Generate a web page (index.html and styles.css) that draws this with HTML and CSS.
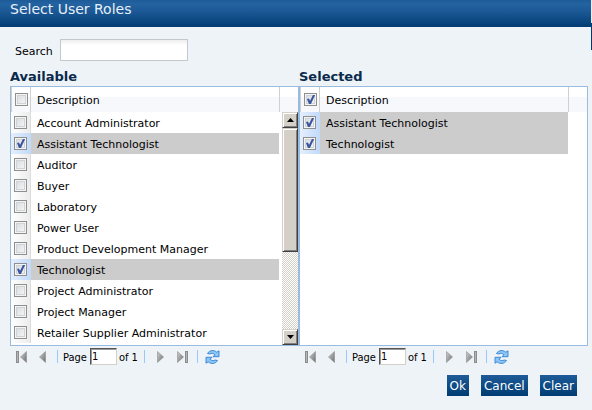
FILE: index.html
```html
<!DOCTYPE HTML>
<html lang="en">
<head>
<meta charset="utf-8">
<title>Select User Roles</title>
<link rel="stylesheet" href="styles.css">
</head>
<body>
	<svg class="defs" width="0" height="0">
		<defs>
			<linearGradient id="grey" x1="0" y1="0" x2="1" y2="1">
				<stop offset="0" stop-color="#d0d0d0"/>
				<stop offset="1" stop-color="#6c6c6c"/>
			</linearGradient>
			<symbol id="first" viewBox="0 0 11 12">
				<rect x="0.5" y="0.5" width="2" height="11" fill="#b5b5b5" stroke="#8c8c8c"/>
				<path d="M10.500 0.500V11.500L4.500 6z" fill="url(#grey)" stroke="#8f8f8f" stroke-width="0.6"/>
			</symbol>
			<symbol id="prev" viewBox="0 0 7 12">
				<path d="M6.500 0.500V11.500L0.500 6z" fill="url(#grey)" stroke="#8f8f8f" stroke-width="0.6"/>
			</symbol>
			<symbol id="next" viewBox="0 0 7 12">
				<path d="M0.500 0.500V11.500L6.500 6z" fill="url(#grey)" stroke="#8f8f8f" stroke-width="0.6"/>
			</symbol>
			<symbol id="last" viewBox="0 0 11 12">
				<path d="M0.500 0.500V11.500L6.500 6z" fill="url(#grey)" stroke="#8f8f8f" stroke-width="0.6"/>
				<rect x="8.500" y="0.500" width="2" height="11" fill="#b5b5b5" stroke="#8c8c8c"/>
			</symbol>
			<symbol id="refresh" viewBox="0 0 15 14">
				<path id="arrow" d="M2.500 3.500C4.500 0 9 -0.300 11.800 2.200L14 0.800V6.700H8L10 4.700C8 3 6.200 3 5 4z" fill="#8cc8f7" stroke="#2f7fd0" stroke-width="0.9" stroke-linejoin="round"/>
				<use href="#arrow" transform="rotate(180 7.500 7)"/>
			</symbol>
		</defs>
	</svg>

	<div class="dialog">
		<h1 class="title">Select User Roles</h1>
		<div class="content">
			<div class="search">
				<label for="search">Search</label>
				<input type="text" id="search">
			</div>

			<div class="lists">
				<div class="list">
					<h2>Available</h2>
					<div class="grid">
						<table>
							<thead>
								<tr><th class="check"><input type="checkbox" aria-label="All available"></th><th class="desc">Description</th><th class="end"></th></tr>
							</thead>
							<tbody>
								<tr><td class="check"><input type="checkbox" id="a1"></td><td class="desc"><label for="a1">Account Administrator</label></td><td></td></tr>
								<tr class="on"><td class="check"><input type="checkbox" id="a2" checked></td><td class="desc"><label for="a2">Assistant Technologist</label></td><td></td></tr>
								<tr><td class="check"><input type="checkbox" id="a3"></td><td class="desc"><label for="a3">Auditor</label></td><td></td></tr>
								<tr><td class="check"><input type="checkbox" id="a4"></td><td class="desc"><label for="a4">Buyer</label></td><td></td></tr>
								<tr><td class="check"><input type="checkbox" id="a5"></td><td class="desc"><label for="a5">Laboratory</label></td><td></td></tr>
								<tr><td class="check"><input type="checkbox" id="a6"></td><td class="desc"><label for="a6">Power User</label></td><td></td></tr>
								<tr><td class="check"><input type="checkbox" id="a7"></td><td class="desc"><label for="a7">Product Development Manager</label></td><td></td></tr>
								<tr class="on"><td class="check"><input type="checkbox" id="a8" checked></td><td class="desc"><label for="a8">Technologist</label></td><td></td></tr>
								<tr><td class="check"><input type="checkbox" id="a9"></td><td class="desc"><label for="a9">Project Administrator</label></td><td></td></tr>
								<tr><td class="check"><input type="checkbox" id="a10"></td><td class="desc"><label for="a10">Project Manager</label></td><td></td></tr>
								<tr><td class="check"><input type="checkbox" id="a11"></td><td class="desc"><label for="a11">Retailer Supplier Administrator</label></td><td></td></tr>
							</tbody>
						</table>
						<div class="scrollbar">
							<button type="button" aria-label="Scroll up"><svg width="7" height="4"><path d="M0 4L3.500 0L7 4z"/></svg></button>
							<div class="thumb"></div>
							<div class="track"></div>
							<button type="button" aria-label="Scroll down"><svg width="7" height="4"><path d="M0 0H7L3.500 4z"/></svg></button>
						</div>
					</div>
					<div class="pager">
						<button type="button" class="first" aria-label="First page"><svg width="11" height="12"><use href="#first"/></svg></button>
						<button type="button" class="prev" aria-label="Previous page"><svg width="7" height="12"><use href="#prev"/></svg></button>
						<span class="sep"></span>
						<label for="page1">Page</label>
						<input type="text" id="page1" value="1">
						<span class="total">of 1</span>
						<span class="sep"></span>
						<button type="button" class="next" aria-label="Next page"><svg width="7" height="12"><use href="#next"/></svg></button>
						<button type="button" class="last" aria-label="Last page"><svg width="11" height="12"><use href="#last"/></svg></button>
						<span class="sep"></span>
						<button type="button" class="refresh" aria-label="Refresh"><svg width="15" height="14"><use href="#refresh"/></svg></button>
					</div>
				</div>

				<div class="list">
					<h2>Selected</h2>
					<div class="grid">
						<table>
							<thead>
								<tr><th class="check"><input type="checkbox" aria-label="All selected" checked></th><th class="desc">Description</th><th class="end"></th></tr>
							</thead>
							<tbody>
								<tr class="on"><td class="check"><input type="checkbox" id="s1" checked></td><td class="desc"><label for="s1">Assistant Technologist</label></td><td></td></tr>
								<tr class="on"><td class="check"><input type="checkbox" id="s2" checked></td><td class="desc"><label for="s2">Technologist</label></td><td></td></tr>
							</tbody>
						</table>
					</div>
					<div class="pager">
						<button type="button" class="first" aria-label="First page"><svg width="11" height="12"><use href="#first"/></svg></button>
						<button type="button" class="prev" aria-label="Previous page"><svg width="7" height="12"><use href="#prev"/></svg></button>
						<span class="sep"></span>
						<label for="page2">Page</label>
						<input type="text" id="page2" value="1">
						<span class="total">of 1</span>
						<span class="sep"></span>
						<button type="button" class="next" aria-label="Next page"><svg width="7" height="12"><use href="#next"/></svg></button>
						<button type="button" class="last" aria-label="Last page"><svg width="11" height="12"><use href="#last"/></svg></button>
						<span class="sep"></span>
						<button type="button" class="refresh" aria-label="Refresh"><svg width="15" height="14"><use href="#refresh"/></svg></button>
					</div>
				</div>
			</div>

			<div class="buttons">
				<button type="button">Ok</button>
				<button type="button">Cancel</button>
				<button type="button">Clear</button>
			</div>
		</div>
	</div>
</body>
</html>
```
FILE: styles.css
```css
*{
	margin: 0;
	padding: 0;
	box-sizing: border-box;
}

body{
	font-family: Verdana, "DejaVu Sans", sans-serif;
	font-size: 11px;
	color: #000;
	background: linear-gradient(#e8eef4 23px, #003c73 23px, #003c73 50px, #eef3f7 50px) no-repeat #eef3f7;
	min-height: 100vh;
	padding-right: 1px;
}
.defs{
	position: absolute;
}
button{
	font: inherit;
	border: 0;
	background: none;
}
svg{
	display: block;
}

.dialog{
	background: #edf3f7;
	min-height: 100vh;
}
.title{
	height: 27px;
	padding-left: 10px;
	background: linear-gradient(#1d5a98, #2463a1 4px, #1b5794 12px, #003c73);
	color: #e6f0fa;
	font-size: 14px;
	font-weight: normal;
	line-height: 18px;
}
.content{
	padding: 12px 3px 0 10px;
}

.search{
	display: flex;
	align-items: center;
	gap: 7px;
	padding-left: 5px;
}
.search label{
	padding-top: 2px;
}
.search input{
	width: 128px;
	height: 22px;
	padding: 0 3px;
	border: 1px solid #c3c8cc;
	background: linear-gradient(#eee, #fff 5px);
	font: inherit;
}

/* two lists side by side */
.lists{
	display: flex;
	padding-top: 7px;
}
.list{
	flex: 1;
	min-width: 0;
}
.list h2{
	height: 18px;
	color: #0a2a4c;
	font-size: 13px;
	line-height: 17px;
}
.grid{
	display: flex;
	position: relative;
	height: 260px;
	border: 1px solid #99bbe0;
	background: #fff;
}

table{
	width: 100%;
	table-layout: fixed;
	border-collapse: separate;
	border-spacing: 0;
	align-self: flex-start;
}
thead tr{
	height: 25px;
	background: linear-gradient(#fff 10px, #f6f8fc 10px);
}
tbody tr{
	height: 21px;
}
th{
	font-weight: normal;
	text-align: left;
}
.check{
	width: 20px;
	padding-left: 3px;
}
thead .check{
	border-left: 1px solid #d0d0d0;
	border-right: 1px solid #d0d0d0;
}
tbody .check{
	background: linear-gradient(to right, #fff, #ececec);
	border-right: 1px solid #dcdcdc;
}
tbody .on .check{
	background: linear-gradient(to right, #e4efff, #c3daf9);
	border-right-color: #c3daf9;
}
.desc{
	padding: 2px 0 0 6px;
	white-space: nowrap;
}
.on .desc{
	background: #ccc;
}
.end{
	width: 19px;
	border-left: 1px solid #d0d0d0;
}

input[type=checkbox]{
	display: block;
	appearance: none;
	width: 13px;
	height: 13px;
	border: 1px solid #8e8f8f;
	background: linear-gradient(135deg, #d4d7db, #fafafa);
	box-shadow: inset 0 0 0 1px #f4f4f4, inset 0 0 0 2px #d0d3d6;
}
input[type=checkbox]:checked::before{
	content: "";
	display: block;
	width: 11px;
	height: 11px;
	background: #3a56a0;
	clip-path: polygon(18% 45%, 36% 42%, 46% 62%, 72% 8%, 92% 8%, 54% 92%, 36% 92%);
}

.scrollbar{
	display: flex;
	flex-direction: column;
	position: absolute;
	top: 25px;
	right: 0;
	bottom: 0;
	width: 16px;
}
.scrollbar button, .thumb{
	border: 1px solid;
	border-color: #d4d0c8 #404040 #404040 #d4d0c8;
	background: #d4d0c8;
	box-shadow: inset 1px 1px #fff, inset -1px -1px #808080;
}
.scrollbar button{
	display: flex;
	align-items: center;
	justify-content: center;
	height: 16px;
}
.thumb{
	height: 124px;
}
.track{
	flex: 1;
	background: repeating-conic-gradient(#d4d0c8 0 25%, #fff 0 50%) 0 0 / 2px 2px;
}

.pager{
	display: flex;
	align-items: center;
	height: 21px;
	padding-left: 6px;
	font-family: Tahoma, "DejaVu Sans Condensed", "DejaVu Sans", sans-serif;
}
.prev{
	margin: 0 11px 0 12px;
}
.sep{
	width: 1px;
	height: 13px;
	background: #98c8ff;
}
.pager label{
	margin: 2px 3px 0 5px;
}
.pager input{
	width: 27px;
	height: 17px;
	padding: 0 1px;
	border: 1px solid;
	border-color: #555 #d4d0c8 #d4d0c8 #555;
	box-shadow: inset 1px 1px #999;
	font: inherit;
}
.total{
	margin: 2px 6px 0 2px;
}
.next{
	margin: 0 13px 0 12px;
}
.last{
	margin-right: 9px;
}
.refresh{
	margin-left: 7px;
}

.buttons{
	display: flex;
	justify-content: flex-end;
	gap: 12px;
	padding: 8px 11px 0 0;
}
.buttons button{
	height: 21px;
	padding: 0 3px;
	background: linear-gradient(#1e5b98, #003c73);
	color: #fff;
	font-size: 12px;
}
```
